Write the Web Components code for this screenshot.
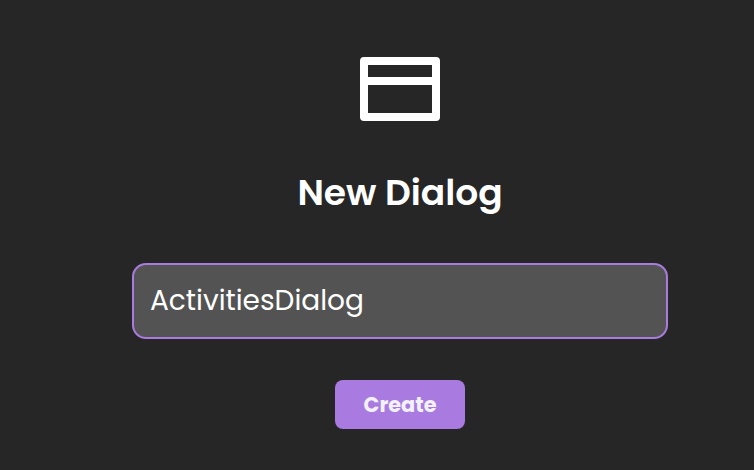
<!DOCTYPE html>
<html lang="en">
<head>
<meta charset="utf-8">
<title>New Dialog</title>
<style>
html,body{margin:0;height:100%;background:#262626}
body{overflow:hidden;font-family:Poppins,Inter,"Open Sans",sans-serif;font-feature-settings:"cv11" 1;color:#fff}
</style>
</head>
<body>
<new-dialog>
  <window-icon slot="icon"></window-icon>
  <dialog-title slot="title">New Dialog</dialog-title>
  <name-field slot="field">ActivitiesDialog</name-field>
  <action-button slot="action">Create</action-button>
</new-dialog>
<script>
function define(name, html) {
  const template = document.createElement('template');
  template.innerHTML = html;
  customElements.define(name, class extends HTMLElement {
    constructor() {
      super();
      this.attachShadow({mode: 'open'}).append(template.content.cloneNode(true));
    }
  });
}
define('window-icon', `<style>:host{display:block;width:80px;height:64px}svg{display:block}</style>
<svg width="80" height="64" viewBox="0 0 80 64" fill="#fff" aria-hidden="true"><path fill-rule="evenodd" d="M4 0H76Q80 0 80 4V60Q80 64 76 64H4Q0 64 0 60V4Q0 0 4 0ZM8 8V20H72V8ZM8 28V56H72V28Z"/></svg>`);
define('dialog-title', `<style>:host{display:block;margin-top:45px}
h1{margin:0;font-size:36px;line-height:54px;font-weight:600;white-space:nowrap}</style><h1><slot></slot></h1>`);
define('name-field', `<style>:host{display:block;margin-top:43px}
div{box-sizing:border-box;width:536px;height:76px;padding:0 16px;border:2px solid #a97be0;border-radius:14px;background:#535353;display:flex;align-items:center;font-size:28px;line-height:42px;white-space:nowrap}</style>
<div role="textbox" aria-label="Dialog name" tabindex="0"><slot></slot></div>`);
define('action-button', `<style>:host{display:block;margin-top:41px}
button{display:block;width:130px;height:49px;padding:0;border:0;border-radius:8px;background:#a97be0;color:#f2f1fd;font:inherit;font-feature-settings:inherit;font-size:20.8px;font-weight:700;line-height:30px}</style>
<button type="button"><slot></slot></button>`);
define('new-dialog', `<style>:host{box-sizing:border-box;display:flex;flex-direction:column;align-items:center;width:754px;height:470px;padding:57px 0 0 46px;background:#262626}</style>
<slot name="icon"></slot><slot name="title"></slot><slot name="field"></slot><slot name="action"></slot>`);
</script>
</body>
</html>
